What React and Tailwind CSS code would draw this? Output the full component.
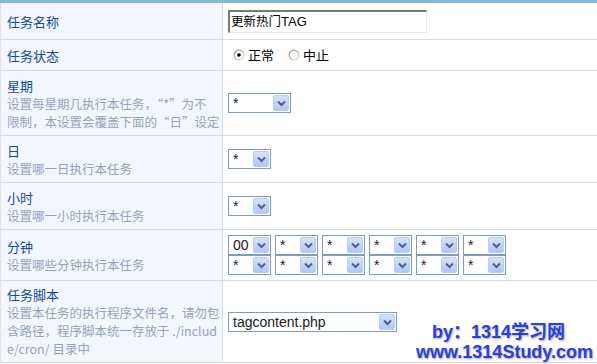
import React from 'react';

const cjk = '"Noto Sans CJK SC", "Noto Sans", sans-serif';

const XpSelect = ({ value, width }) => (
  <div
    className="flex h-[20px] items-center justify-between border border-[#7f9db9] bg-white pl-[4px] pr-[1px]"
    style={{ width }}
  >
    <span className="text-[14px] leading-none text-[#1a1a1a]" style={{ fontFamily: '"Liberation Sans", Arial, sans-serif' }}>
      {value}
    </span>
    <span className="flex h-[16px] w-[16px] items-center justify-center rounded-[2px] border border-[#b9cdf6] bg-gradient-to-b from-[#d6e2fd] to-[#b2c6f5]">
      <svg width="9" height="7" viewBox="0 0 9 7">
        <path d="M1 1.5 L4.5 5 L8 1.5" fill="none" stroke="#4d6185" strokeWidth="2" />
      </svg>
    </span>
  </div>
);

const Radio = ({ checked }) => (
  <svg width="12" height="12" viewBox="0 0 12 12">
    <defs>
      <linearGradient id={checked ? 'rg1' : 'rg2'} x1="0" y1="0" x2="1" y2="1">
        <stop offset="0" stopColor="#8b8b7e" />
        <stop offset="1" stopColor="#f1efe2" />
      </linearGradient>
    </defs>
    <circle cx="6" cy="6" r="5.5" fill={`url(#${checked ? 'rg1' : 'rg2'})`} />
    <circle cx="6" cy="6" r="4.2" fill="#fff" />
    {checked && <circle cx="6" cy="6" r="1.8" fill="#000" />}
  </svg>
);

const Row = ({ h, label, desc, children }) => (
  <div className={`flex border-b border-[#d5dce8] ${h}`}>
    <div className="flex w-[222px] shrink-0 flex-col justify-center border-r border-[#d5dce8] bg-[#f3f7fd] pl-[6px]">
      <div className="text-[13px] leading-[19px] text-[#0f4e96]">{label}</div>
      {desc && (
        <div className="text-[12.5px] leading-[18px] text-[#97a3be]">
          {desc.map((line, i) => (
            <div key={i} className="whitespace-nowrap">{line}</div>
          ))}
        </div>
      )}
    </div>
    <div className="flex flex-1 items-center bg-white pl-[5px]">{children}</div>
  </div>
);

const App = () => {
  const minutes = ['00', '*', '*', '*', '*', '*', '*', '*', '*', '*', '*', '*'];

  return (
    <div className="relative h-[364px] w-[597px] bg-white" style={{ fontFamily: cjk }}>
      <div className="border-t-[3px] border-[#86b9d6]">
        <div className="border-l border-[#dce3ee]">
          <Row h="h-[37px]" label="任务名称">
            <div className="flex h-[23px] w-[199px] items-center border-t-2 border-l-2 border-r border-b border-t-[#7a7a6a] border-l-[#7a7a6a] border-r-[#ece9d8] border-b-[#ece9d8] pl-[1px] text-[12.5px] text-black">
              更新热门<span style={{ fontFamily: '"Liberation Sans", Arial, sans-serif' }} className="text-[13px]">TAG</span>
            </div>
          </Row>

          <Row h="h-[31px]" label="任务状态">
            <div className="flex items-center pl-[5px] text-[13px] text-black">
              <Radio checked />
              <span className="ml-[3px]">正常</span>
              <span className="ml-[14px]"><Radio /></span>
              <span className="ml-[3px]">中止</span>
            </div>
          </Row>

          <Row
            h="h-[65px]"
            label="星期"
            desc={['设置每星期几执行本任务，“*”为不', '限制，本设置会覆盖下面的“日”设定']}
          >
            <XpSelect value="*" width={63} />
          </Row>

          <Row h="h-[47px]" label="日" desc={['设置哪一日执行本任务']}>
            <XpSelect value="*" width={43} />
          </Row>

          <Row h="h-[47px]" label="小时" desc={['设置哪一小时执行本任务']}>
            <XpSelect value="*" width={43} />
          </Row>

          <Row h="h-[51px]" label="分钟" desc={['设置哪些分钟执行本任务']}>
            <div className="grid grid-cols-[repeat(6,43px)] gap-x-[4px]">
              {minutes.map((m, i) => (
                <XpSelect key={i} value={m} width={43} />
              ))}
            </div>
          </Row>

          <Row
            h="h-[82px]"
            label="任务脚本"
            desc={['设置本任务的执行程序文件名，请勿包', '含路径，程序脚本统一存放于 ./includ', 'e/cron/ 目录中']}
          >
            <div className="mt-[1px]">
              <XpSelect value="tagcontent.php" width={169} />
            </div>
          </Row>
        </div>
      </div>

      <div
        className="absolute left-[416px] top-[322px] text-[18px] font-bold leading-[20px] text-[#2b3fd9] [text-shadow:1px_1px_2px_rgba(60,60,90,0.45)]"
        style={{ fontFamily: '"Liberation Sans", Arial, "Noto Sans CJK SC", sans-serif' }}
      >
        <div className="pl-[16px]">by：1314学习网</div>
        <div>www.1314Study.com</div>
      </div>
    </div>
  );
};

export default App;
